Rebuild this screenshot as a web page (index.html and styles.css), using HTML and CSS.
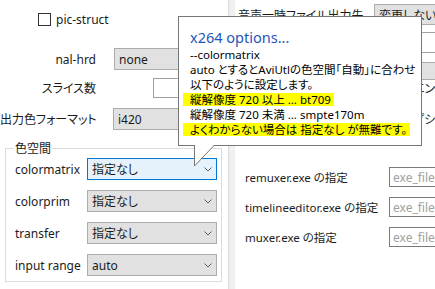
FILE: index.html
```html
<!DOCTYPE html>
<html lang="ja">
<head>
  <meta charset="UTF-8">
  <title>x264 settings</title>
  <link rel="stylesheet" href="styles.css">
</head>
<body>
  <div class="wrap">
    <div class="left">
      <div class="row check-row">
        <span class="check"></span>
        <span>pic-struct</span>
      </div>
      <div class="row r-nal">
        <span class="lbl">nal-hrd</span>
        <div class="sel w-nal"><span>none</span></div>
      </div>
      <div class="row r-slice">
        <span class="lbl">スライス数</span>
        <div class="box w-slice"></div>
      </div>
      <div class="row r-fmt">
        <span class="lbl">出力色フォーマット</span>
        <div class="sel w-fmt"><span>i420</span></div>
      </div>

      <div class="group">
        <div class="legend">色空間</div>
        <div class="grow first">
          <span class="glbl">colormatrix</span>
          <div class="sel focus">
            <span>指定なし</span>
            <svg class="chev" width="8" height="5" viewBox="0 0 8 5"><polyline points="0.5,0.5 4,4 7.5,0.5" /></svg>
          </div>
        </div>
        <div class="grow">
          <span class="glbl">colorprim</span>
          <div class="sel">
            <span>指定なし</span>
            <svg class="chev" width="8" height="5" viewBox="0 0 8 5"><polyline points="0.5,0.5 4,4 7.5,0.5" /></svg>
          </div>
        </div>
        <div class="grow">
          <span class="glbl">transfer</span>
          <div class="sel">
            <span>指定なし</span>
            <svg class="chev" width="8" height="5" viewBox="0 0 8 5"><polyline points="0.5,0.5 4,4 7.5,0.5" /></svg>
          </div>
        </div>
        <div class="grow">
          <span class="glbl">input range</span>
          <div class="sel">
            <span>auto</span>
            <svg class="chev" width="8" height="5" viewBox="0 0 8 5"><polyline points="0.5,0.5 4,4 7.5,0.5" /></svg>
          </div>
        </div>
      </div>
    </div>

    <div class="split"></div>

    <div class="right">
      <div class="row r-audio">
        <span class="rlbl">音声一時ファイル出力先</span>
        <div class="sel w-audio"><span>変更しない</span></div>
      </div>
      <div class="hidden-area">
        <div class="box w-hid h1"></div>
        <div class="box w-hid h2 gray"></div>
        <div class="hid-text t1">音声エンコード</div>
        <div class="hid-text t2">オプション</div>
      </div>
      <div class="row exe first-exe">
        <span class="elbl">remuxer.exe の指定</span>
        <div class="box w-exe"><span class="ph">exe_files</span></div>
      </div>
      <div class="row exe">
        <span class="elbl">timelineeditor.exe の指定</span>
        <div class="box w-exe"><span class="ph">exe_files</span></div>
      </div>
      <div class="row exe">
        <span class="elbl">muxer.exe の指定</span>
        <div class="box w-exe"><span class="ph">exe_files</span></div>
      </div>
    </div>
  </div>

  <!-- tooltip for colormatrix -->
  <div class="tip">
    <div class="tip-title">x264 options...</div>
    <div class="line">--colormatrix</div>
    <div class="line">auto とするとAviUtlの色空間「自動」に合わせ</div>
    <div class="line">以下のように設定します。</div>
    <div class="line"><span class="hl">縦解像度 720 以上 ... bt709</span></div>
    <div class="line">縦解像度 720 未満 ... smpte170m</div>
    <div class="line"><span class="hl">よくわからない場合は 指定なし が無難です。</span></div>
    <svg class="tail" width="22" height="23" viewBox="0 0 22 23">
      <polygon points="1,0 1,21 21,0" fill="#fff" />
      <line x1="1.5" y1="0" x2="1.5" y2="21" stroke="#767676" />
      <line x1="1.5" y1="21" x2="21" y2="0.5" stroke="#767676" />
    </svg>
  </div>
</body>
</html>
```

FILE: styles.css
```css
html, body {
  margin: 0;
  padding: 0;
}
body {
  width: 435px;
  height: 289px;
  overflow: hidden;
  position: relative;
  background: #fff;
  color: #1b1b1b;
  font-family: "Noto Sans", "Noto Sans CJK JP", sans-serif;
  font-size: 12px;
  font-feature-settings: "palt";
}
.wrap {
  display: flex;
  height: 289px;
}
.left {
  width: 228px;
  flex: none;
}
.split {
  width: 6px;
  flex: none;
  background: #f0f0f0;
  border-left: 1px solid #dadada;
}
.right {
  flex: 1;
  overflow: hidden;
}
.row {
  display: flex;
  align-items: center;
  white-space: nowrap;
}

/* left column */
.check-row {
  margin-top: 13px;
  padding-left: 38px;
  height: 13px;
}
.check {
  width: 11px;
  height: 11px;
  border: 1px solid #333;
  margin-right: 5px;
}
.lbl {
  width: 96px;
  text-align: right;
  flex: none;
}
.r-nal { margin-top: 22px; height: 22px; }
.r-slice { margin-top: 8px; height: 20px; }
.r-fmt { margin-top: 10px; height: 22px; }
.w-nal { width: 120px; margin-left: 18px; }
.w-fmt { width: 120px; margin-left: 17px; }
.w-slice { width: 60px; height: 20px; margin-left: 57px; }

.sel {
  display: flex;
  align-items: center;
  justify-content: space-between;
  box-sizing: border-box;
  height: 22px;
  padding: 0 4px 0 4px;
  background: #e1e1e1;
  border: 1px solid #adadad;
  flex: none;
}
.sel.focus {
  background: #e5f1fb;
  border-color: #0078d7;
}
.chev polyline {
  fill: none;
  stroke: #606060;
  stroke-width: 1;
}
.box {
  box-sizing: border-box;
  height: 20px;
  border: 1px solid #a0a0a0;
  background: #fff;
  flex: none;
}

.group {
  margin: 18px 0 0 5px;
  width: 217px;
  box-sizing: border-box;
  border: 1px solid #dcdcdc;
  padding: 0 4px 5px 9px;
}
.legend {
  display: table;
  margin: -8px 0 0 -1px;
  padding: 0 1px;
  line-height: 15px;
  background: #fff;
}
.grow {
  display: flex;
  align-items: center;
  height: 22px;
  margin-top: 10px;
}
.grow.first { margin-top: 2px; }
.glbl {
  width: 72px;
  flex: none;
}
.grow .sel {
  width: 130px;
}

/* right column */
.r-audio {
  margin-top: 4px;
  height: 21px;
  padding-left: 3px;
}
.rlbl { width: 136px; flex: none; }
.w-audio { width: 80px; height: 21px; }
.hidden-area {
  height: 142px;
  overflow: hidden;
}
.w-hid { width: 80px; margin-left: 139px; }
.h1 { margin-top: 7px; height: 21px; }
.h2 { margin-top: 9px; height: 18px; }
.gray { background: #e1e1e1; border-color: #adadad; }
.hid-text {
  height: 15px;
  line-height: 15px;
  white-space: nowrap;
}
.t1 { margin-top: 1px; padding-left: 154px; }
.t2 { margin-top: 16px; padding-left: 167px; }

.exe { height: 20px; margin-top: 10px; padding-left: 10px; }
.first-exe { margin-top: 0; }
.elbl {
  width: 144px;
  flex: none;
  font-size: 11.5px;
}
.w-exe {
  width: 70px;
  border-color: #7a7a7a;
  display: flex;
  align-items: center;
  padding-left: 3px;
}
.ph { color: #a0a0a0; }

/* tooltip */
.tip {
  position: absolute;
  left: 178px;
  top: 16px;
  width: 244px;
  height: 130px;
  box-sizing: border-box;
  border: 1px solid #767676;
  background: #fff;
  padding: 10px 0 0 11px;
  color: #000;
  z-index: 2;
}
.tip-title {
  font-size: 14.5px;
  line-height: 20px;
  color: #1f56b8;
}
.line {
  height: 15px;
  line-height: 15px;
  font-size: 11.5px;
  white-space: nowrap;
}
.hl {
  display: inline-block;
  vertical-align: top;
  margin: 1px 0 0 -7px;
  padding: 0 3px 0 7px;
  line-height: 13px;
  background: #ffff00;
}
.tail {
  position: absolute;
  left: 14px;
  top: 128px;
}
```
